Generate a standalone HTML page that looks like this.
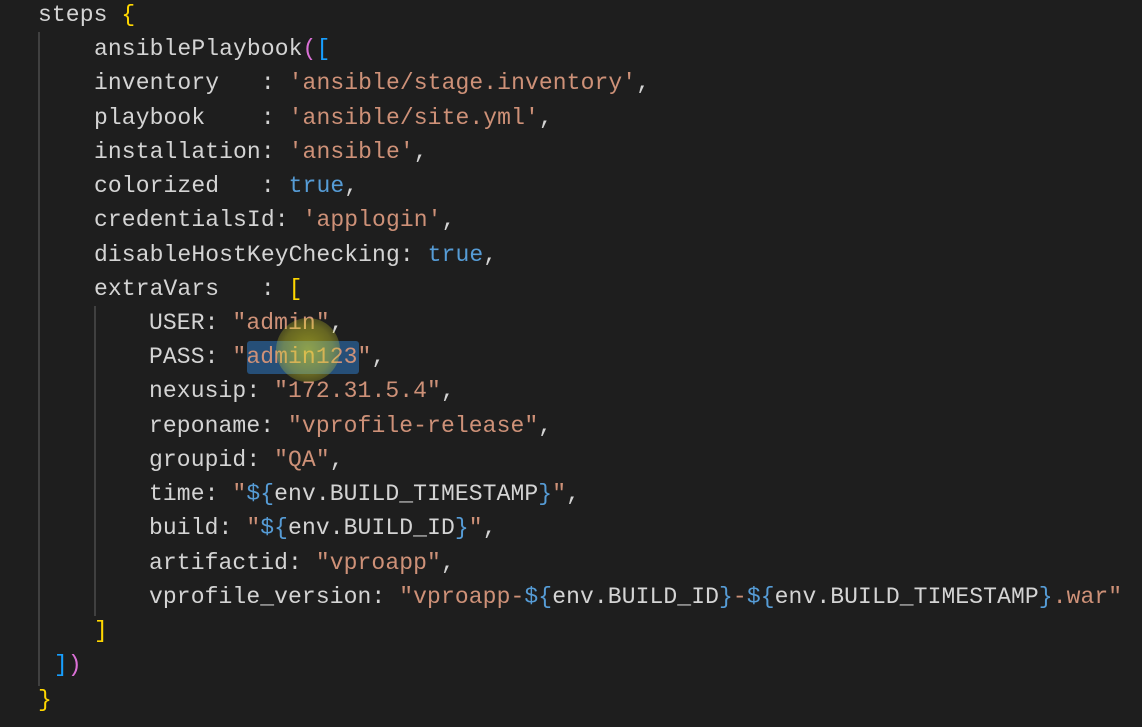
<!DOCTYPE html>
<html><head><meta charset="utf-8"><style>
body{margin:0;width:1142px;height:727px;background:#1e1e1e;overflow:hidden;position:relative;font-family:"Liberation Mono",monospace;font-size:23px;letter-spacing:0.1px;color:#d4d4d4}
.l{position:absolute;white-space:pre;height:34px;line-height:34px}
.s{color:#ce9178}.k{color:#569cd6}.y{color:#ffd700}.m{color:#da70d6}.b{color:#179fff}
.g{position:absolute;width:2px;background:#404040}
</style></head><body>
<div class="g" style="left:38px;top:32px;height:654px"></div>
<div class="g" style="left:94px;top:306px;height:310px"></div>
<div style="position:absolute;left:247px;top:341px;width:112px;height:33px;background:#264f78;border-radius:3px"></div>
<div class="l" style="left:38px;top:-2px">steps <span class="y">{</span></div>
<div class="l" style="left:94px;top:32px">ansiblePlaybook<span class="m">(</span><span class="b">[</span></div>
<div class="l" style="left:94px;top:66px">inventory   : <span class="s">'ansible/stage.inventory'</span>,</div>
<div class="l" style="left:94px;top:101px">playbook    : <span class="s">'ansible/site.yml'</span>,</div>
<div class="l" style="left:94px;top:135px">installation: <span class="s">'ansible'</span>,</div>
<div class="l" style="left:94px;top:169px">colorized   : <span class="k">true</span>,</div>
<div class="l" style="left:94px;top:203px">credentialsId: <span class="s">'applogin'</span>,</div>
<div class="l" style="left:94px;top:238px">disableHostKeyChecking: <span class="k">true</span>,</div>
<div class="l" style="left:94px;top:272px">extraVars   : <span class="y">[</span></div>
<div class="l" style="left:149px;top:306px">USER: <span class="s">"admin"</span>,</div>
<div class="l" style="left:149px;top:340px">PASS: <span class="s">"admin123"</span>,</div>
<div class="l" style="left:149px;top:374px">nexusip: <span class="s">"172.31.5.4"</span>,</div>
<div class="l" style="left:149px;top:409px">reponame: <span class="s">"vprofile-release"</span>,</div>
<div class="l" style="left:149px;top:443px">groupid: <span class="s">"QA"</span>,</div>
<div class="l" style="left:149px;top:477px">time: <span class="s">"</span><span class="k">${</span>env.BUILD_TIMESTAMP<span class="k">}</span><span class="s">"</span>,</div>
<div class="l" style="left:149px;top:511px">build: <span class="s">"</span><span class="k">${</span>env.BUILD_ID<span class="k">}</span><span class="s">"</span>,</div>
<div class="l" style="left:149px;top:546px">artifactid: <span class="s">"vproapp"</span>,</div>
<div class="l" style="left:149px;top:580px">vprofile_version: <span class="s">"vproapp-</span><span class="k">${</span>env.BUILD_ID<span class="k">}</span><span class="s">-</span><span class="k">${</span>env.BUILD_TIMESTAMP<span class="k">}</span><span class="s">.war"</span></div>
<div class="l y" style="left:94px;top:614px">]</div>
<div class="l" style="left:54px;top:648px"><span class="b">]</span><span class="m">)</span></div>
<div class="l y" style="left:38px;top:683px">}</div>
<div style="position:absolute;left:276px;top:318px;width:64px;height:64px;border-radius:50%;background:radial-gradient(circle,rgba(230,230,40,0.55) 0%,rgba(220,220,40,0.38) 55%,rgba(200,200,40,0) 100%)"></div>
</body></html>
